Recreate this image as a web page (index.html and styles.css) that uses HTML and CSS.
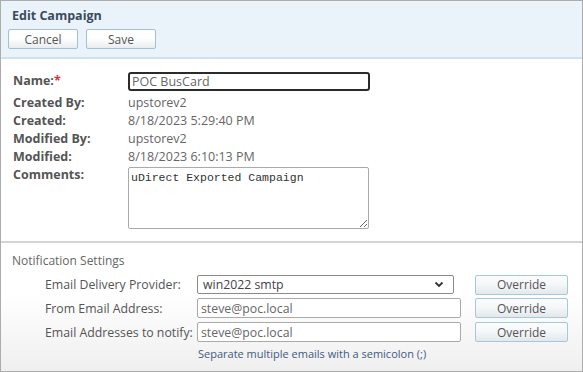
FILE: index.html
```html
<!DOCTYPE html>
<html lang="en">
<head>
    <meta charset="UTF-8">
    <meta name="viewport" content="width=device-width, initial-scale=1.0">
    <title>Edit Campaign</title>
    <link rel="stylesheet" href="styles.css">
</head>
<body>
    <div class="page">
        <!-- Header with actions -->
        <div class="header">
            <h1>Edit Campaign</h1>
            <div class="actions">
                <button class="btn">Cancel</button>
                <button class="btn">Save</button>
            </div>
        </div>

        <!-- Campaign details -->
        <div class="details">
            <div class="label name-label">Name:<span class="req">*</span></div>
            <div><input class="name-input" type="text" value="POC BusCard"></div>

            <div class="label">Created By:</div>
            <div class="value">upstorev2</div>

            <div class="label">Created:</div>
            <div class="value">8/18/2023 5:29:40 PM</div>

            <div class="label">Modified By:</div>
            <div class="value">upstorev2</div>

            <div class="label">Modified:</div>
            <div class="value">8/18/2023 6:10:13 PM</div>

            <div class="label">Comments:</div>
            <div><textarea class="comments">uDirect Exported Campaign</textarea></div>
        </div>

        <!-- Notification settings -->
        <div class="notify">
            <div class="notify-title">Notification Settings</div>
            <div class="notify-grid">
                <div class="notify-label">Email Delivery Provider:</div>
                <div class="select">
                    <span>win2022 smtp</span>
                    <svg width="10" height="7" viewBox="0 0 10 7"><path d="M1.5 1.5 L5 5 L8.5 1.5" fill="none" stroke="#333" stroke-width="1.8"/></svg>
                </div>
                <button class="btn override">Override</button>

                <div class="notify-label">From Email Address:</div>
                <input class="field" type="text" value="steve@poc.local" disabled>
                <button class="btn override">Override</button>

                <div class="notify-label">Email Addresses to notify:</div>
                <input class="field" type="text" value="steve@poc.local" disabled>
                <button class="btn override">Override</button>

                <div></div>
                <div class="hint">Separate multiple emails with a semicolon (;)</div>
            </div>
        </div>
    </div>
</body>
</html>
```

FILE: styles.css
```css
body {
    margin: 0;
    background-color: white;
    font-family: "Open Sans", "Liberation Sans", sans-serif;
    font-size: 12.5px;
    color: #555;
}
.page {
    width: 583px;
    height: 372px;
    box-sizing: border-box;
    border: 1px solid #acacac;
    display: flex;
    flex-direction: column;
}
.header {
    background-color: #eaf2fa;
    height: 58px;
    flex-shrink: 0;
    border-bottom: 2px solid #d0e2f0;
    padding: 0 7px;
    box-sizing: border-box;
}
h1 {
    margin: 0;
    padding: 6px 0 0 4px;
    font-size: 12.5px;
    font-weight: bold;
    color: #3b4b5e;
    line-height: 17px;
}
.actions {
    display: flex;
    gap: 8px;
    margin-top: 5px;
}
.btn {
    font-family: "Open Sans", "Liberation Sans", sans-serif;
    font-size: 12px;
    color: #555;
    background: linear-gradient(#ffffff, #ffffff 45%, #e9ecef);
    border: 1px solid #a3c2d1;
    border-radius: 2px;
    width: 70px;
    height: 20px;
    padding: 0;
    line-height: 17px;
}
.details {
    display: grid;
    grid-template-columns: 115px 1fr;
    grid-template-rows: 24px 18px 18px 18px 18px 1fr;
    padding: 11px 11px 0 12px;
    height: 182px;
    flex-shrink: 0;
    box-sizing: border-box;
}
.label {
    font-weight: bold;
    color: #555;
    line-height: 18px;
}
.name-label {
    line-height: 22px;
}
.req {
    color: #d9333f;
}
.value {
    color: #666;
    line-height: 18px;
}
.name-input {
    width: 242px;
    height: 19px;
    box-sizing: border-box;
    border: 2px solid #2b2b2b;
    border-radius: 3px;
    padding: 0 2px;
    font-family: "Open Sans", "Liberation Sans", sans-serif;
    font-size: 12.5px;
    color: #666;
    margin-top: 2px;
}
.comments {
    width: 241px;
    height: 62px;
    box-sizing: border-box;
    margin-top: 1px;
    border: 1px solid #aaa;
    border-radius: 2px;
    padding: 3px 2px;
    font-family: "Liberation Mono", monospace;
    font-size: 11.5px;
    color: #333;
    resize: both;
    display: block;
}
.notify {
    flex: 1;
    border-top: 2px solid #d4d4d4;
    background: linear-gradient(#ffffff, #ffffff 40%, #efefef);
    padding: 10px 11px 0;
}
.notify-title {
    color: #666;
    font-size: 12px;
    line-height: 16px;
}
.notify-grid {
    display: grid;
    grid-template-columns: 152px 264px 93px;
    grid-template-rows: 19px 20px 20px auto;
    row-gap: 4px;
    margin: 6px 0 0 33px;
    align-items: center;
}
.notify-label {
    color: #555;
    font-size: 12.3px;
    white-space: nowrap;
}
.select {
    width: 257px;
    height: 19px;
    box-sizing: border-box;
    border: 1px solid #8a8a8a;
    border-radius: 2px;
    background: white;
    display: flex;
    align-items: center;
    justify-content: space-between;
    padding: 0 9px 0 5px;
    color: #444;
    font-size: 12.3px;
}
.field {
    height: 20px;
    box-sizing: border-box;
    border: 1px solid #aaa;
    border-radius: 2px;
    background: white;
    padding: 0 3px;
    font-family: "Open Sans", "Liberation Sans", sans-serif;
    font-size: 12.3px;
    color: #666;
    width: 100%;
}
.override {
    width: 93px;
    height: 20px;
    margin-left: 14px;
    background: linear-gradient(#fbfcfd, #f4f6f8 50%, #e3e8ed);
    border-color: #a2cadb;
}
.hint {
    grid-column: 2 / span 2;
    color: #3e5b7f;
    font-size: 11px;
    margin-top: 0;
    padding-left: 1px;
}
```
